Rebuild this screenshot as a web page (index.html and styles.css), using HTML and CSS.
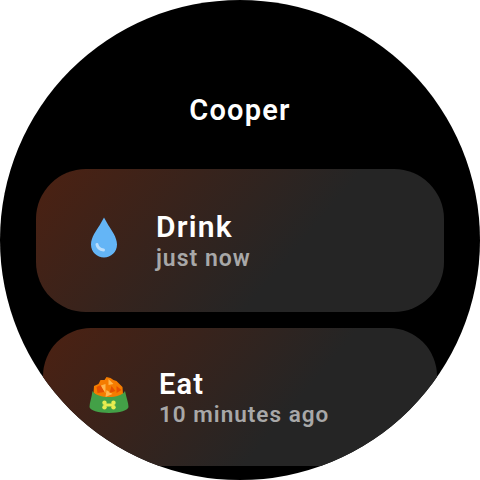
FILE: index.html
```html
<!DOCTYPE html>
<html lang="en">
<head>
<meta charset="utf-8">
<title>Cooper</title>
<link rel="stylesheet" href="styles.css">
</head>
<body>
<main class="watch">
  <h1 class="title">Cooper</h1>
  <div class="list">
    <section class="card">
      <svg class="icon" viewBox="0 0 48 48" aria-hidden="true">
        <path fill="#64b5f6" d="M24 0.500L28.500 8.500C31.500 13 37 20.500 37 27.500C37 35 31 40.500 24 40.500C17 40.500 11 35 11 27.500C11 20.500 16.500 13 19.500 8.500Z"/>
        <path fill="none" stroke="#bbdefb" stroke-width="3" stroke-linecap="round" d="M17 27.500C17.500 30.500 20 32.500 23.500 33"/>
      </svg>
      <div class="text">
        <div class="name">Drink</div>
        <div class="when">just now</div>
      </div>
    </section>
    <section class="card card-far">
      <svg class="icon" viewBox="84.500 373 48 48" aria-hidden="true">
        <path fill="#f57c00" d="M93 393L93.500 386L98 384L100 380L104 380L106 377L110 378L113 380L116 381L119 384L122 387L122.500 394C115 400 100 400 93 393Z"/>
        <path fill="#ffb74d" d="M99 386L105 384L105 393ZM108 379L113 384L108 385ZM106 390L112 394L105 397Z"/>
        <path fill="#e65100" d="M96 387L100 385L104 392L97 393ZM111 386L115 391L109 393ZM116 386L121 390L116 393Z"/>
        <path fill="#43a047" d="M92 391C97 399 120 399 124.500 391C126 398 128 403 128 407C128 410 119 413 108.500 413C98 413 89 410 89 407C89 403 91 398 92 391Z"/>
        <g fill="#e8ec50">
          <rect x="104" y="403.500" width="9" height="3"/>
          <circle cx="104" cy="402.800" r="2.200"/>
          <circle cx="104" cy="407.200" r="2.200"/>
          <circle cx="113" cy="402.800" r="2.200"/>
          <circle cx="113" cy="407.200" r="2.200"/>
        </g>
      </svg>
      <div class="text">
        <div class="name">Eat</div>
        <div class="when">10 minutes ago</div>
      </div>
    </section>
  </div>
</main>
</body>
</html>
```
FILE: styles.css
```css
html, body {
  margin: 0;
  padding: 0;
  background: #fff;
}

.watch {
  width: 480px;
  height: 480px;
  border-radius: 50%;
  background: #000;
  overflow: hidden;
  display: flex;
  flex-direction: column;
  align-items: center;
  font-family: Roboto, "Liberation Sans", sans-serif;
}

.title {
  margin: 93px 0 0;
  height: 34px;
  font-size: 29px;
  line-height: 34px;
  font-weight: 600;
  letter-spacing: 1.200px;
  color: #fff;
}

.list {
  margin-top: 42px;
  display: flex;
  flex-direction: column;
  align-items: center;
  gap: 16px;
}

.card {
  flex: none;
  width: 408px;
  height: 143px;
  box-sizing: border-box;
  border-radius: 50px;
  padding-left: 44px;
  display: flex;
  align-items: center;
  gap: 28px;
  background: linear-gradient(130deg, #4c2112 0%, #252525 62%);
}

.card-far {
  width: 394px;
  height: 138px;
  border-radius: 48px;
  padding-left: 41.500px;
  gap: 26.500px;
}

.icon {
  width: 48px;
  height: 48px;
  flex: none;
}

.text {
  display: flex;
  flex-direction: column;
}

.name {
  font-size: 30px;
  line-height: 33px;
  font-weight: 600;
  letter-spacing: 1.200px;
  color: #fff;
}

.when {
  margin-top: 2px;
  font-size: 23px;
  line-height: 27px;
  font-weight: 600;
  letter-spacing: 1px;
  color: #a8a8a8;
}

.card-far .name {
  font-size: 29px;
  line-height: 30px;
}

.card-far .when {
  font-size: 22.500px;
  line-height: 26px;
}

.card-far .text {
  margin-top: 2px;
}
```
